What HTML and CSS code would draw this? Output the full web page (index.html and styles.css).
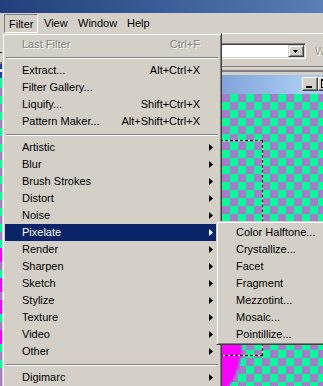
FILE: index.html
```html
<!DOCTYPE html>
<html>
<head>
<meta charset="utf-8">
<link rel="stylesheet" href="styles.css">
</head>
<body>
<div class="titlebar"></div>
<div class="menubar">
  <span class="mb-item mb-filter active">Filter</span>
  <span class="mb-item mb-view">View</span>
  <span class="mb-item mb-window">Window</span>
  <span class="mb-item">Help</span>
</div>
<div class="row">
  <div class="leftstrip"></div>
  <div class="main">
    <div class="options">
      <div class="combo">
        <div class="combo-field"></div>
        <div class="combo-btn"><svg width="5" height="3" viewBox="0 0 5 3"><polygon points="0,0 5,0 2.5,3" fill="#000"/></svg></div>
      </div>
      <span class="opt-label">Width:</span>
    </div>
    <div class="workspace">
      <div class="docwin">
        <div class="doc-title">
          <span class="capbtn"><span class="min-glyph"></span></span>
          <span class="capbtn"><span class="max-glyph"></span></span>
        </div>
        <div class="canvas">
          <div class="pink"></div>
          <div class="selection"></div>
        </div>
      </div>
    </div>
  </div>
</div>

<div class="menu">
  <div class="item disabled"><span class="label">Last Filter</span><span class="sc">Ctrl+F</span></div>
  <div class="sep"></div>
  <div class="item"><span class="label">Extract...</span><span class="sc">Alt+Ctrl+X</span></div>
  <div class="item"><span class="label">Filter Gallery...</span></div>
  <div class="item"><span class="label">Liquify...</span><span class="sc">Shift+Ctrl+X</span></div>
  <div class="item"><span class="label">Pattern Maker...</span><span class="sc">Alt+Shift+Ctrl+X</span></div>
  <div class="sep"></div>
  <div class="item"><span class="label">Artistic</span><svg class="arrow" width="4" height="7" viewBox="0 0 4 7"><polygon points="0,0 4,3.5 0,7"/></svg></div>
  <div class="item"><span class="label">Blur</span><svg class="arrow" width="4" height="7" viewBox="0 0 4 7"><polygon points="0,0 4,3.5 0,7"/></svg></div>
  <div class="item"><span class="label">Brush Strokes</span><svg class="arrow" width="4" height="7" viewBox="0 0 4 7"><polygon points="0,0 4,3.5 0,7"/></svg></div>
  <div class="item"><span class="label">Distort</span><svg class="arrow" width="4" height="7" viewBox="0 0 4 7"><polygon points="0,0 4,3.5 0,7"/></svg></div>
  <div class="item"><span class="label">Noise</span><svg class="arrow" width="4" height="7" viewBox="0 0 4 7"><polygon points="0,0 4,3.5 0,7"/></svg></div>
  <div class="item hl"><span class="label">Pixelate</span><svg class="arrow" width="4" height="7" viewBox="0 0 4 7"><polygon points="0,0 4,3.5 0,7"/></svg></div>
  <div class="item"><span class="label">Render</span><svg class="arrow" width="4" height="7" viewBox="0 0 4 7"><polygon points="0,0 4,3.5 0,7"/></svg></div>
  <div class="item"><span class="label">Sharpen</span><svg class="arrow" width="4" height="7" viewBox="0 0 4 7"><polygon points="0,0 4,3.5 0,7"/></svg></div>
  <div class="item"><span class="label">Sketch</span><svg class="arrow" width="4" height="7" viewBox="0 0 4 7"><polygon points="0,0 4,3.5 0,7"/></svg></div>
  <div class="item"><span class="label">Stylize</span><svg class="arrow" width="4" height="7" viewBox="0 0 4 7"><polygon points="0,0 4,3.5 0,7"/></svg></div>
  <div class="item"><span class="label">Texture</span><svg class="arrow" width="4" height="7" viewBox="0 0 4 7"><polygon points="0,0 4,3.5 0,7"/></svg></div>
  <div class="item"><span class="label">Video</span><svg class="arrow" width="4" height="7" viewBox="0 0 4 7"><polygon points="0,0 4,3.5 0,7"/></svg></div>
  <div class="item"><span class="label">Other</span><svg class="arrow" width="4" height="7" viewBox="0 0 4 7"><polygon points="0,0 4,3.5 0,7"/></svg></div>
  <div class="sep"></div>
  <div class="item"><span class="label">Digimarc</span><svg class="arrow" width="4" height="7" viewBox="0 0 4 7"><polygon points="0,0 4,3.5 0,7"/></svg></div>
</div>

<div class="submenu">
  <div class="item"><span class="label">Color Halftone...</span></div>
  <div class="item"><span class="label">Crystallize...</span></div>
  <div class="item"><span class="label">Facet</span></div>
  <div class="item"><span class="label">Fragment</span></div>
  <div class="item"><span class="label">Mezzotint...</span></div>
  <div class="item"><span class="label">Mosaic...</span></div>
  <div class="item"><span class="label">Pointillize...</span></div>
</div>
</body>
</html>
```

FILE: styles.css
```css
* { box-sizing: border-box; }
html, body { margin: 0; padding: 0; }
body {
  width: 323px;
  height: 386px;
  overflow: hidden;
  position: relative;
  background: #d4d0c8;
  font-family: "Liberation Sans", Arial, sans-serif;
  font-size: 11px;
  color: #000;
}

.titlebar {
  height: 13px;
  background: linear-gradient(90deg, #21407c 0%, #3b5c98 50%, #5b7eb6 100%);
}

.menubar {
  height: 20px;
  display: flex;
  align-items: flex-start;
  padding-top: 1px;
  white-space: nowrap;
}
.mb-item {
  height: 19px;
  line-height: 18px;
  padding-left: 6px;
}
.mb-filter {
  margin-left: 4px;
  width: 34px;
  padding-left: 4px;
}
.mb-view { width: 34px; }
.mb-window { width: 49px; }
.mb-item.active {
  border-top: 1px solid #808080;
  border-left: 1px solid #808080;
  border-right: 1px solid #fff;
  border-bottom: 1px solid #fff;
}

.row {
  display: flex;
  height: 353px;
}
.leftstrip {
  width: 2px;
  flex: none;
  background:
    linear-gradient(180deg,
      #d4d0c8 0 19px, #000 19px 20px, #d4d0c8 20px 29px, #808080 29px 31px,
      #1c3fa8 31px 36px, #f4f4ff 36px 39px, #1c3fa8 39px 45px,
      #00ff99 45px 55px, #a67bc9 55px 63px, #00ff99 63px 71px, #a67bc9 71px 79px,
      #00ff99 79px 87px, #a67bc9 87px 95px, #00ff99 95px 103px, #a67bc9 103px 111px,
      #00ff99 111px 119px, #a67bc9 119px 127px, #00ff99 127px 135px, #a67bc9 135px 143px,
      #00ff99 143px 151px, #a67bc9 151px 159px, #00ff99 159px 167px, #a67bc9 167px 175px,
      #00ff99 175px 183px, #a67bc9 183px 191px, #00ff99 191px 199px, #a67bc9 199px 207px,
      #00ff99 207px 215px, #ff00ff 215px 229px, #a67bc9 229px 237px, #00ff99 237px 245px,
      #ff00ff 245px 259px, #a67bc9 259px 267px, #ff00ff 267px 281px, #00ff99 281px 289px,
      #a67bc9 289px 297px, #ff00ff 297px 311px, #00ff99 311px 319px, #a67bc9 319px 327px,
      #00ff99 327px 335px, #a67bc9 335px 353px);
}
.main {
  flex: 1;
  min-width: 0;
  overflow: hidden;
}

.options {
  height: 34px;
  border-top: 1px solid #fff;
  border-bottom: 1px solid #808080;
  display: flex;
  align-items: flex-start;
  padding-top: 9px;
  padding-left: 148px;
  white-space: nowrap;
}
.combo {
  width: 156px;
  height: 16px;
  flex: none;
  display: flex;
  border-top: 1px solid #808080;
  border-left: 1px solid #808080;
  border-right: 1px solid #fff;
  border-bottom: 1px solid #fff;
  box-shadow: inset 1px 1px #404040, inset -1px -1px #d4d0c8;
  padding: 1px;
}
.combo-field { flex: 1; background: #fff; }
.combo-btn {
  width: 16px;
  flex: none;
  background: #d4d0c8;
  border-top: 1px solid #d4d0c8;
  border-left: 1px solid #d4d0c8;
  border-right: 1px solid #404040;
  border-bottom: 1px solid #404040;
  box-shadow: inset 1px 1px #fff, inset -1px -1px #808080;
  display: flex;
  align-items: center;
  justify-content: center;
}
.combo-btn svg { display: block; margin-left: -1px; }
.opt-label {
  margin-left: 9px;
  line-height: 16px;
  color: #a09d96;
  text-shadow: 1px 1px #fff;
}

.workspace {
  height: 319px;
  padding-top: 3px;
  padding-left: 148px;
}
.docwin {
  width: 200px;
  height: 320px;
  border-top: 2px solid #808080;
  padding-top: 3px;
  background: #d4d0c8;
}
.doc-title {
  height: 19px;
  display: flex;
  align-items: flex-start;
  padding-top: 2px;
  padding-left: 152px;
  background: linear-gradient(90deg, #5f86c2 0px, #80a4d8 72px, #a6caf0 150px, #a6caf0 200px);
}
.capbtn {
  width: 16px;
  height: 14px;
  flex: none;
  background: #d4d0c8;
  border-top: 1px solid #fff;
  border-left: 1px solid #fff;
  border-right: 1px solid #404040;
  border-bottom: 1px solid #404040;
  box-shadow: inset -1px -1px #808080;
  position: relative;
}
.min-glyph {
  display: block;
  width: 6px;
  height: 2px;
  background: #000;
  margin: 8px 0 0 3px;
}
.max-glyph {
  display: block;
  width: 9px;
  height: 9px;
  border: 1px solid #000;
  border-top-width: 2px;
  margin: 1px 0 0 2px;
}
.canvas {
  height: 300px;
  position: relative;
  overflow: hidden;
  background-color: #00ff99;
  background-image: conic-gradient(#a67bc9 25%, #00ff99 0 50%, #a67bc9 0 75%, #00ff99 0);
  background-size: 16px 16px;
  background-position: 0 0;
}
.pink {
  position: absolute;
  left: 56px;
  top: 249px;
  width: 36px;
  height: 56px;
  background: #ff00ff;
  border-bottom-right-radius: 100% 100%;
  filter: blur(0.8px);
}
.selection {
  position: absolute;
  left: 20px;
  top: 46px;
  width: 93px;
  height: 216px;
  border: 1px solid #fff;
}
.selection::before {
  content: "";
  position: absolute;
  inset: -1px;
  border: 1px dashed #000;
}

/* menus */
.menu, .submenu {
  position: absolute;
  background: #d4d0c8;
  border-top: 1px solid #d4d0c8;
  border-left: 1px solid #d4d0c8;
  border-right: 1px solid #404040;
  border-bottom: 1px solid #404040;
  box-shadow: inset 1px 1px #fff, inset -1px -1px #808080;
  padding: 2px;
  white-space: nowrap;
}
.menu {
  left: 2px;
  top: 33px;
  width: 220px;
  height: 380px;
  border-bottom: none;
}
.submenu {
  left: 216px;
  top: 221px;
  width: 130px;
  padding-bottom: 1px;
}
.item {
  height: 17px;
  line-height: 17px;
  display: flex;
  align-items: center;
  padding: 0 6px 0 17px;
}
.item .label { flex: 1; }
.item .sc { margin-right: 13px; }
.item .arrow { display: block; fill: #000; }
.item.hl { background: #0a246a; color: #fff; }
.item.hl .arrow { fill: #fff; }
.item.disabled { color: #808080; text-shadow: 1px 1px #fff; }
.sep {
  height: 9px;
  margin: 0 1px;
  padding-top: 4px;
}
.sep::before {
  content: "";
  display: block;
  height: 1px;
  background: #808080;
  border-bottom: 1px solid #fff;
  box-sizing: content-box;
}
```
